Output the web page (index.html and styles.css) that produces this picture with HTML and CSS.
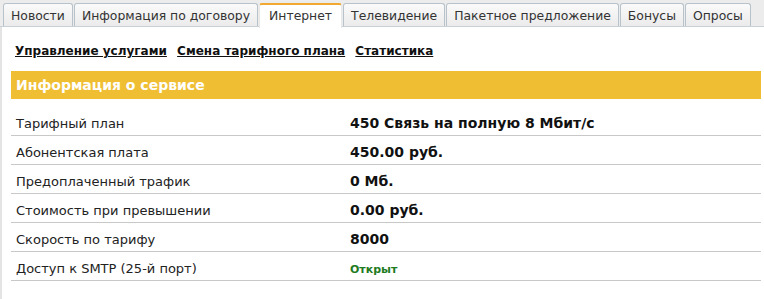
FILE: index.html
```html
<!DOCTYPE html>
<html lang="ru">
<head>
    <meta charset="UTF-8">
    <title>Интернет</title>
    <link rel="stylesheet" href="styles.css">
</head>
<body>
    <div class="tabs">
        <a class="tab" href="#">Новости</a>
        <a class="tab" href="#">Информация по договору</a>
        <a class="tab active" href="#">Интернет</a>
        <a class="tab" href="#">Телевидение</a>
        <a class="tab" href="#">Пакетное предложение</a>
        <a class="tab" href="#">Бонусы</a>
        <a class="tab" href="#">Опросы</a>
    </div>
    <div class="panel">
        <div class="links">
            <a href="#">Управление услугами</a>
            <a href="#">Смена тарифного плана</a>
            <a href="#">Статистика</a>
        </div>
        <div class="section-title">Информация о сервисе</div>
        <table class="info">
            <tr><td>Тарифный план</td><td class="val">450 Связь на полную 8 Мбит/с</td></tr>
            <tr><td>Абонентская плата</td><td class="val">450.00 руб.</td></tr>
            <tr><td>Предоплаченный трафик</td><td class="val">0 Мб.</td></tr>
            <tr><td>Стоимость при превышении</td><td class="val">0.00 руб.</td></tr>
            <tr><td>Скорость по тарифу</td><td class="val">8000</td></tr>
            <tr><td>Доступ к SMTP (25-й порт)</td><td class="val"><span class="open">Открыт</span></td></tr>
        </table>
    </div>
</body>
</html>
```

FILE: styles.css
```css
body {
    margin: 0;
    font-family: "DejaVu Sans", Verdana, sans-serif;
    font-size: 13px;
    color: #222;
    background: #fff;
}
.tabs {
    display: flex;
    padding: 3px 0 0 3px;
    background: #ececec;
    border-bottom: 1px solid #c9d0d6;
    height: 23px;
}
.tab {
    display: block;
    flex-shrink: 0;
    white-space: nowrap;
    height: 22px;
    line-height: 23px;
    padding: 0 7px;
    margin-right: 1px;
    border: 1px solid #b7c2cb;
    border-bottom: none;
    border-radius: 3px 3px 0 0;
    background: linear-gradient(#fafafa, #ebebeb);
    color: #333;
    font-size: 12.4px;
    text-decoration: none;
}
.tab.active {
    background: #fff;
    border-color: #e8e8e8;
    border-top: 2px solid #f0a830;
    line-height: 22px;
    padding: 0 9px;
    margin-bottom: -1px;
    height: 23px;
}
.panel {
    border-left: 2px solid #e4e4e4;
    padding: 0 3px 20px 9px;
}
.links {
    padding: 17px 0 13px 4px;
    font-size: 12px;
    font-weight: bold;
}
.links a {
    color: #111;
    margin-right: 6px;
}
.section-title {
    background: #efbe33;
    color: #fff;
    font-weight: bold;
    font-size: 14px;
    height: 28px;
    line-height: 29px;
    padding-left: 5px;
    margin-bottom: 8px;
}
.info {
    width: 100%;
    border-collapse: collapse;
}
.info td {
    height: 24px;
    border-bottom: 1px solid #c8c8c8;
    padding: 4px 0 0 5px;
}
.info td:first-child {
    width: 329px;
}
.info .val {
    font-weight: bold;
    font-size: 14px;
    color: #111;
}
.open {
    color: #1e7b1e;
    font-size: 11px;
}
```
